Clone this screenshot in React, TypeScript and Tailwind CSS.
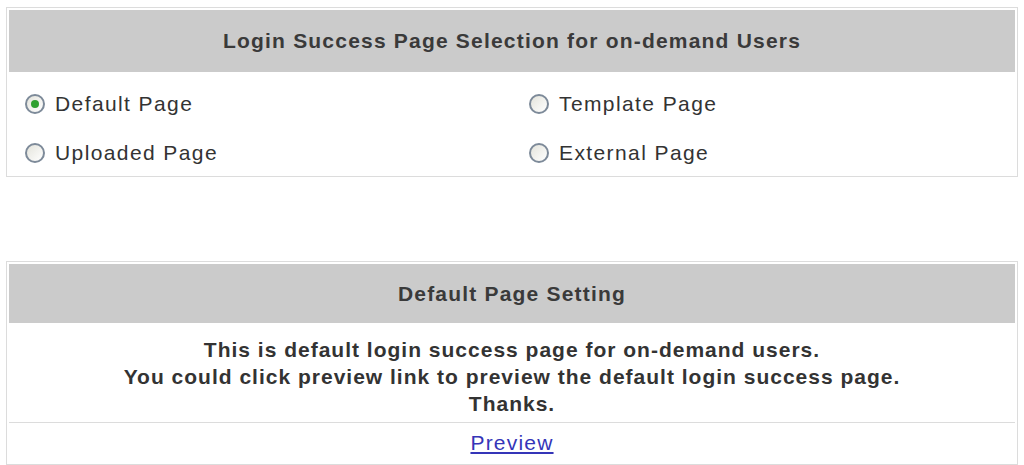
import { useState } from "react";

const options = [
  { id: "default", label: "Default Page" },
  { id: "template", label: "Template Page" },
  { id: "uploaded", label: "Uploaded Page" },
  { id: "external", label: "External Page" },
];

function Radio({ checked }: { checked: boolean }) {
  return (
    <span className="flex h-[20px] w-[20px] shrink-0 items-center justify-center rounded-full border-2 border-[#7d8a99] bg-gradient-to-br from-[#e4e4dc] to-white">
      {checked && <span className="h-[8px] w-[8px] rounded-full bg-[#2fa12f]" />}
    </span>
  );
}

export default function App() {
  const [page, setPage] = useState("default");

  return (
    <div className="h-[465px] w-[1024px] bg-white font-['Liberation_Sans',Arial,sans-serif] text-[21px] tracking-[1.2px] text-[#333]">
      {/* Page selection */}
      <div className="mx-[6px] mt-[7px] border border-[#dcdcdc] p-[2px]">
        <div className="flex h-[62px] items-center justify-center bg-[#cbcbcb] font-bold text-[#3a3a3a]">
          Login Success Page Selection for on-demand Users
        </div>
        <div className="grid grid-cols-2 gap-y-[29px] px-[16px] pb-[11px] pt-[22px]">
          {options.map((o, i) => (
            <label
              key={o.id}
              onClick={() => setPage(o.id)}
              className={`flex cursor-pointer items-center gap-[10px] ${i % 2 === 1 ? "pl-[17px]" : ""}`}
            >
              <Radio checked={page === o.id} />
              <span className="leading-[20px] tracking-[1.4px]">{o.label}</span>
            </label>
          ))}
        </div>
      </div>

      {/* Default page setting */}
      <div className="mx-[6px] mt-[84px] border border-[#dcdcdc] p-[2px]">
        <div className="flex h-[59px] items-center justify-center bg-[#cbcbcb] font-bold text-[#3a3a3a]">
          Default Page Setting
        </div>
        <div className="border-b border-[#dcdcdc] pb-[5px] pt-[13px] text-center font-bold leading-[27px] tracking-[1px]">
          This is default login success page for on-demand users.
          <br />
          You could click preview link to preview the default login success page.
          <br />
          Thanks.
        </div>
        <div className="flex h-[39px] items-center justify-center">
          <a href="#" className="text-[#3535b8] underline">
            Preview
          </a>
        </div>
      </div>
    </div>
  );
}
